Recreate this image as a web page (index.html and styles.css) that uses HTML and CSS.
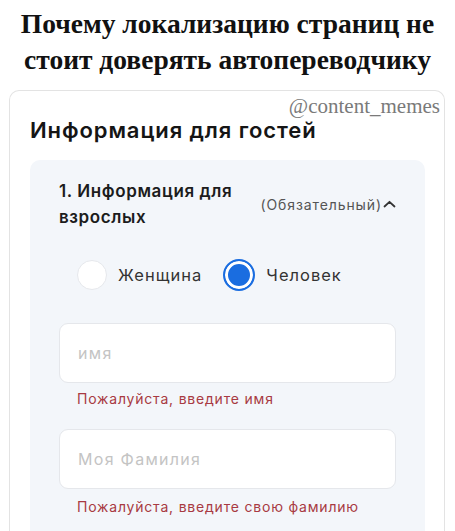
FILE: index.html
```html
<!DOCTYPE html>
<html lang="ru">
<head>
<meta charset="utf-8">
<title>Информация для гостей</title>
<link rel="stylesheet" href="styles.css">
</head>
<body>
<h1 class="meme-title">Почему локализацию страниц не<br>стоит доверять автопереводчику</h1>
<div class="card">
  <div class="watermark">@content_memes</div>
  <h2 class="card-title">Информация для гостей</h2>
  <div class="panel">
    <div class="panel-head">
      <div class="panel-name">1. Информация для<br>взрослых</div>
      <div class="panel-req">(Обязательный)<svg class="chev" width="13" height="8" viewBox="0 0 13 8"><path d="M1.5 6.5 L6.5 1.8 L11.5 6.5" fill="none" stroke="#333" stroke-width="1.8" stroke-linecap="round" stroke-linejoin="round"/></svg></div>
    </div>
    <div class="radios">
      <label class="radio"><span class="dot"></span>Женщина</label>
      <label class="radio"><span class="dot on"></span>Человек</label>
    </div>
    <div class="field">
      <div class="input">имя</div>
      <div class="error">Пожалуйста, введите имя</div>
    </div>
    <div class="field">
      <div class="input">Моя Фамилия</div>
      <div class="error">Пожалуйста, введите свою фамилию</div>
    </div>
  </div>
</div>
</body>
</html>
```
FILE: styles.css
```css
html, body {
  margin: 0;
  padding: 0;
  background: #ffffff;
  height: 531px;
  overflow: hidden;
}
.meme-title {
  margin: 0;
  padding: 6px 0 0;
  height: 84px;
  box-sizing: border-box;
  font-family: "Liberation Serif", serif;
  font-weight: 700;
  font-size: 27.5px;
  line-height: 36px;
  text-align: center;
  color: #111;
}
.card {
  position: relative;
  box-sizing: border-box;
  margin: 6px 10px 0 9px;
  border: 1px solid #e3e3e3;
  border-bottom: 0;
  border-radius: 10px 10px 0 0;
  height: 441px;
  background: #fff;
  font-family: "Inter", sans-serif;
}
.watermark {
  position: absolute;
  right: 4px;
  top: 3px;
  font-family: "Liberation Serif", serif;
  font-size: 21px;
  color: #7a7a7a;
}
.card-title {
  margin: 0;
  padding: 26px 0 0 20px;
  font-size: 22px;
  font-weight: 600;
  line-height: 26px;
  letter-spacing: 0.9px;
  color: #151515;
}
.panel {
  box-sizing: border-box;
  margin: 17px 19px 0 20px;
  background: #f3f6fa;
  border-radius: 10px 10px 0 0;
  padding: 18px 29px 0 29px;
  height: 371px;
}
.panel-head {
  display: flex;
  align-items: center;
  justify-content: space-between;
}
.panel-name {
  font-size: 17px;
  font-weight: 600;
  line-height: 26px;
  letter-spacing: 0.6px;
  color: #1c1c1c;
}
.panel-req {
  display: flex;
  align-items: center;
  gap: 1px;
  font-size: 14px;
  letter-spacing: 0.9px;
  color: #555;
}
.radios {
  display: flex;
  align-items: center;
  gap: 21px;
  padding: 29px 0 0 18px;
}
.radio {
  display: flex;
  align-items: center;
  gap: 11px;
  font-size: 16.5px;
  letter-spacing: 1px;
  color: #333;
}
.dot {
  width: 28px;
  height: 28px;
  border-radius: 50%;
  border: 1px solid #e6e8ec;
  background: #fff;
}
.dot.on {
  width: 28px;
  height: 28px;
  border: 2px solid #1a6de0;
  background: #1a6de0;
  box-shadow: inset 0 0 0 3px #fff;
}
.field {
  margin-top: 32px;
}
.field + .field {
  margin-top: 22px;
}
.input {
  height: 58px;
  border: 1px solid #e5e7eb;
  border-radius: 9px;
  background: #fff;
  padding-left: 18px;
  display: flex;
  align-items: center;
  font-size: 16px;
  letter-spacing: 1.3px;
  color: #c4c4c4;
}
.error {
  padding: 7px 0 0 18px;
  font-size: 14px;
  letter-spacing: 0.8px;
  color: #a83a42;
}
.field + .field .error {
  padding-top: 9px;
}
```
